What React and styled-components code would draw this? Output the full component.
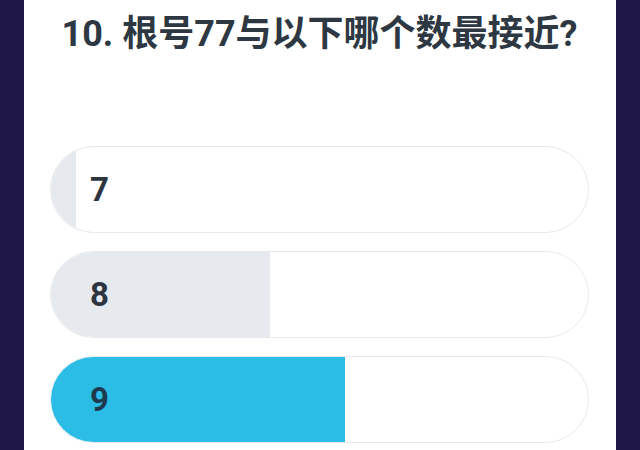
import React from 'react';
import styled, { createGlobalStyle } from 'styled-components';

const GlobalStyle = createGlobalStyle`
  html, body {
    margin: 0;
    padding: 0;
    background: #1f1748;
  }
  body {
    font-family: Roboto, "Noto Sans CJK SC", sans-serif;
  }
`;

// Panel blanco central
const Panel = styled.div`
  width: 592px;
  height: 450px;
  margin: 0 24px;
  background: #ffffff;
  box-sizing: border-box;
  padding: 13px 27px 0 26px;
  display: flex;
  flex-direction: column;
  overflow: hidden;
`;

// Pregunta
const Question = styled.h1`
  margin: 0;
  font-size: 36px;
  line-height: 43px;
  font-weight: 700;
  color: #2e3843;
  text-align: center;
  white-space: nowrap;
`;

const Options = styled.div`
  display: flex;
  flex-direction: column;
  gap: 18px;
  margin-top: 90px;
`;

// Opción con barra de porcentaje
const Option = styled.div`
  position: relative;
  height: 87px;
  border: 1.5px solid #e8e9ec;
  border-radius: 44px;
  box-sizing: border-box;
  overflow: hidden;
  display: flex;
  align-items: center;
  padding-left: 39px;
  background: #ffffff;
`;

const Fill = styled.div`
  position: absolute;
  left: 0;
  top: 0;
  bottom: 0;
  background: ${p => (p.$active ? '#2bbde6' : '#e6eaee')};
`;

const Label = styled.span`
  position: relative;
  font-size: 33px;
  font-weight: 700;
  color: ${p => (p.$active ? '#1d3a4f' : '#2c3540')};
`;

const answers = [
  { label: '7', percent: 4.6 },
  { label: '8', percent: 40.7 },
  { label: '9', percent: 54.8, active: true },
];

const App = () => {
  return (
    <>
      <GlobalStyle />
      <Panel>
        <Question>10. 根号77与以下哪个数最接近?</Question>
        <Options>
          {answers.map(a => (
            <Option key={a.label}>
              <Fill $active={a.active} style={{ width: `${a.percent}%` }} />
              <Label $active={a.active}>{a.label}</Label>
            </Option>
          ))}
        </Options>
      </Panel>
    </>
  );
};

export default App;
